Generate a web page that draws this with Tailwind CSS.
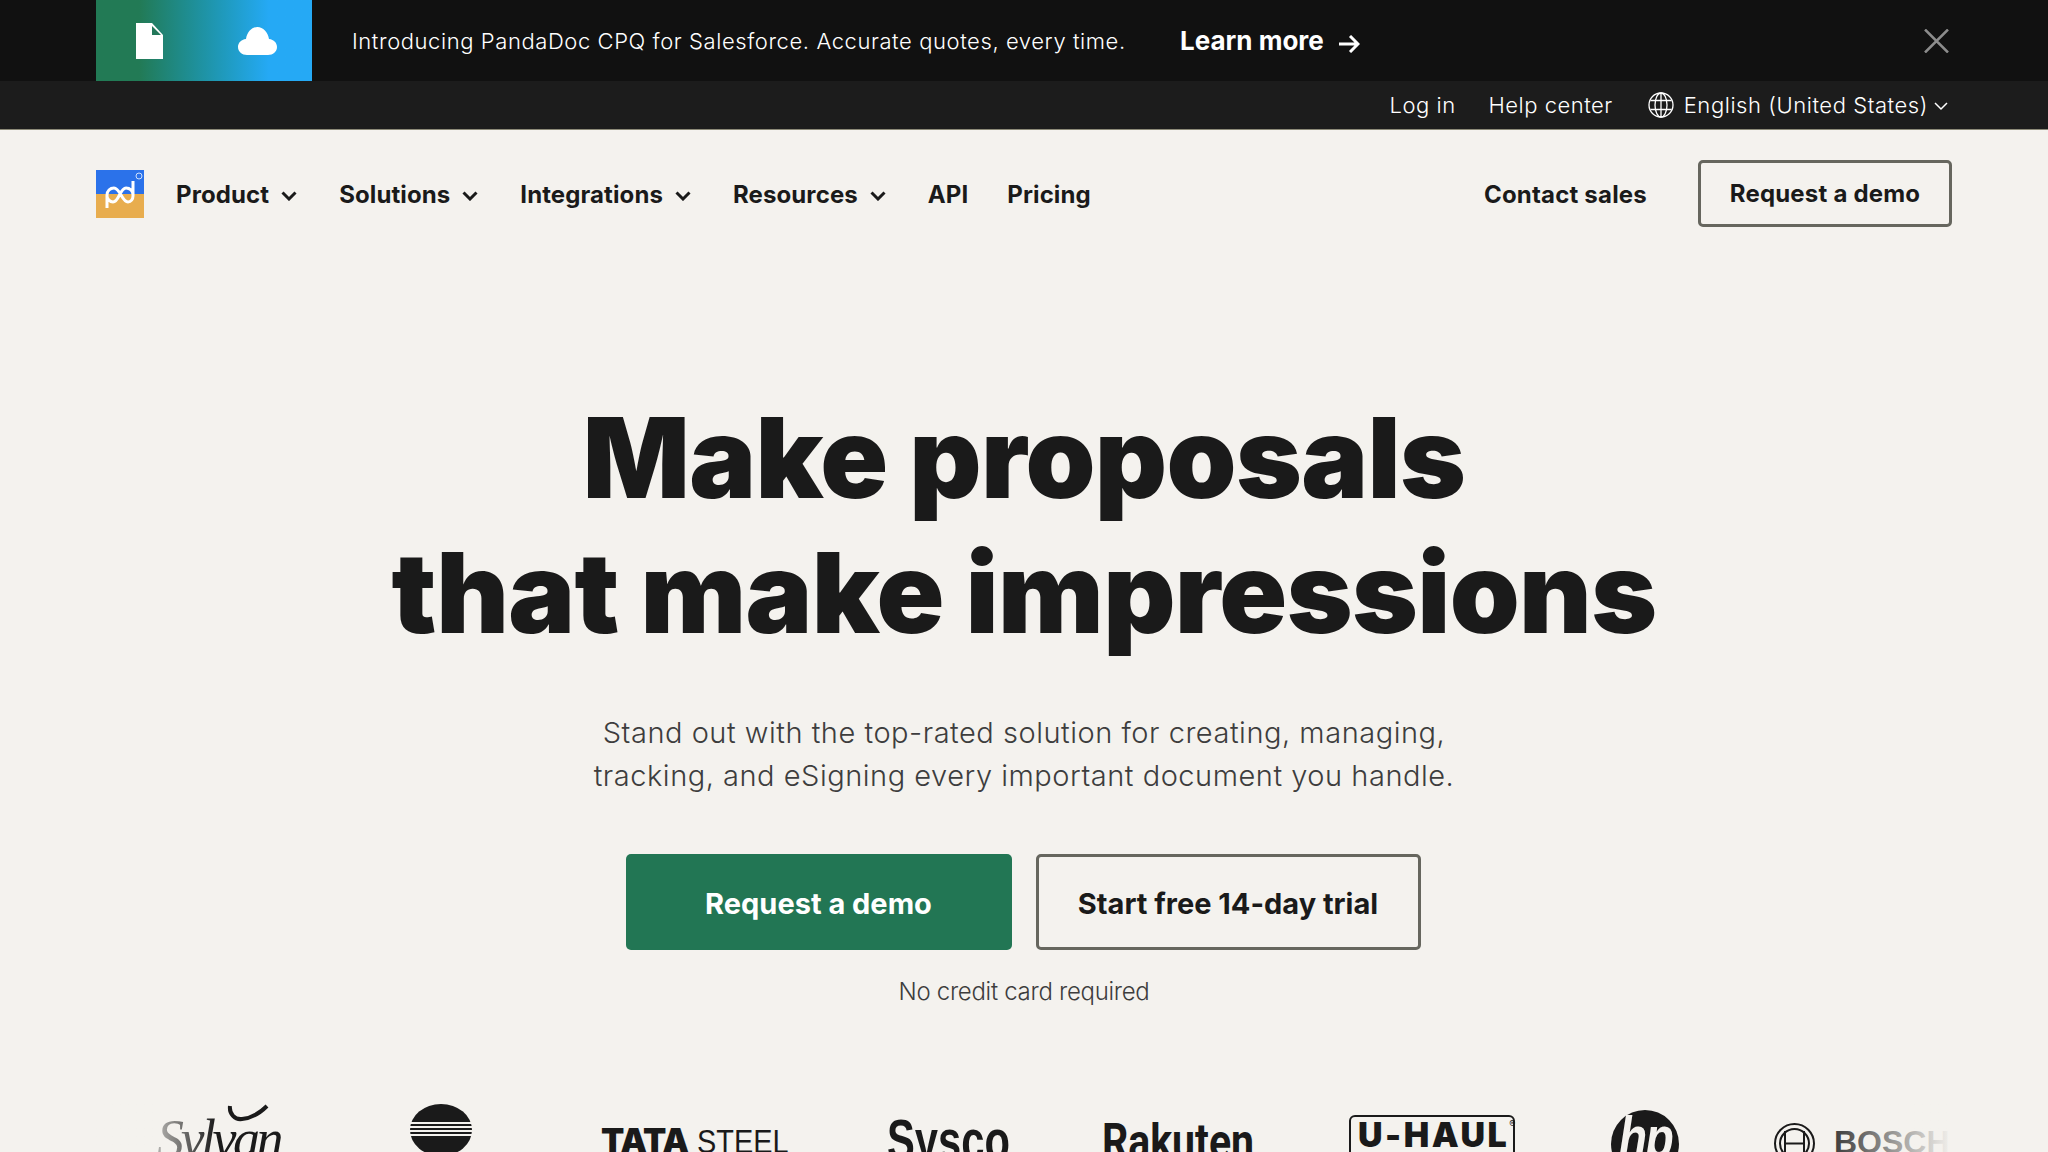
<!DOCTYPE html>
<html lang="en">
<head>
  <meta charset="UTF-8">
  <title>PandaDoc</title>
  <script src="https://cdn.jsdelivr.net/npm/@tailwindcss/browser@4"></script>
</head>
<body class="bg-[#f4f2ee] text-[#1a1a1a] font-['Inter',sans-serif] h-screen overflow-hidden">
  <!-- promo banner -->
  <div class="bg-[#111111] h-[81px] pl-[96px] pr-[99px] flex items-center text-white">
    <div class="w-[216px] h-[81px] shrink-0 flex items-center bg-gradient-to-r from-[#227a55] from-20% to-[#25a9f5] to-80%">
      <svg class="ml-[40px] w-[27px] h-[36px]" viewBox="0 0 27 36"><path d="M0 0H16L27 12V36H0Z" fill="#fff"/><path d="M16 3L25 12H16Z" fill="#24775a"/></svg>
      <svg class="ml-[75px] w-[39px] h-[28px]" viewBox="0 0 39 28"><path d="M9 28C4 28 0 24.500 0 20C0 16 3 12.500 8 12C9 5 14 0 19.500 0C25 0 30 5 31 12C36 12.500 39 16 39 20C39 24.500 35 28 30 28Z" fill="#fff"/></svg>
    </div>
    <p class="ml-[40px] mt-[2px] text-[22px] font-light tracking-[0.58px] whitespace-nowrap w-[828px]">Introducing PandaDoc CPQ for Salesforce. Accurate quotes, every time.</p>
    <a class="text-[26px] font-bold whitespace-nowrap">Learn more</a>
    <svg class="ml-[15px] mt-[6px] w-[21px] h-[18px]" viewBox="0 0 21 18" fill="none" stroke="#fff" stroke-width="3"><path d="M0 9H19M11 1L19 9L11 17"/></svg>
    <svg class="ml-auto w-[25px] h-[24px]" viewBox="0 0 25 24" fill="none" stroke="#8c8c8c" stroke-width="2.500"><path d="M1 0.500L24 23.500M24 0.500L1 23.500"/></svg>
  </div>
  <!-- utility bar -->
  <div class="bg-[#1c1c1c] h-[49px] pl-[96px] pr-[100px] flex items-center justify-end text-white text-[22px] font-light tracking-[0.5px] border-b border-[#8c8a78]">
    <a class="mt-[1px]">Log in</a>
    <a class="ml-[33px] mt-[1px]">Help center</a>
    <svg class="ml-[35px] w-[26px] h-[26px]" viewBox="0 0 26 26" fill="none" stroke="#fff" stroke-width="1.300"><circle cx="13" cy="13" r="12"/><ellipse cx="13" cy="13" rx="6" ry="12"/><path d="M13 1V25M2.500 8.500H23.500M2.500 17.500H23.500"/></svg>
    <span class="ml-[10px] mt-[1px] tracking-[0.56px]">English (United States)</span>
    <svg class="ml-[6px] mt-[3px] w-[14px] h-[9px]" viewBox="0 0 14 9" fill="none" stroke="#fff" stroke-width="1.500"><path d="M1 1L7 7L13 1"/></svg>
  </div>
  <!-- main nav -->
  <nav class="h-[128px] pb-[1px] px-[96px] flex items-center text-[24px] font-bold tracking-[0.1px]">
    <svg class="w-[48px] h-[48px] shrink-0" viewBox="0 0 48 48">
      <rect width="48" height="24" fill="#2b72ea"/>
      <rect y="24" width="48" height="24" fill="#e8ad4e"/>
      <path d="M11 38V25C11 21 14 18 18 18C24 18 26 32 32 32C35 32 37 29 37 26V11M37 25C37 21 34 18 30 18C24 18 23 32 17 32C14 32 11 29 11 26" fill="none" stroke="#fff" stroke-width="3"/>
      <circle cx="43" cy="6" r="3" fill="none" stroke="#cfe0fb" stroke-width="1"/>
    </svg>
    <a class="ml-[32px] mt-[2px]">Product</a>
    <svg class="ml-[12px] mt-[4px] w-[16px] h-[10px]" viewBox="0 0 16 10" fill="none" stroke="#1a1a1a" stroke-width="3"><path d="M1.500 1.500L8 8L14.500 1.500"/></svg>
    <a class="ml-[42px] mt-[2px]">Solutions</a>
    <svg class="ml-[12px] mt-[4px] w-[16px] h-[10px]" viewBox="0 0 16 10" fill="none" stroke="#1a1a1a" stroke-width="3"><path d="M1.500 1.500L8 8L14.500 1.500"/></svg>
    <a class="ml-[42px] mt-[2px]">Integrations</a>
    <svg class="ml-[12px] mt-[4px] w-[16px] h-[10px]" viewBox="0 0 16 10" fill="none" stroke="#1a1a1a" stroke-width="3"><path d="M1.500 1.500L8 8L14.500 1.500"/></svg>
    <a class="ml-[42px] mt-[2px]">Resources</a>
    <svg class="ml-[12px] mt-[4px] w-[16px] h-[10px]" viewBox="0 0 16 10" fill="none" stroke="#1a1a1a" stroke-width="3"><path d="M1.500 1.500L8 8L14.500 1.500"/></svg>
    <a class="ml-[42px] mt-[2px]">API</a>
    <a class="ml-[39px] mt-[2px]">Pricing</a>
    <a class="ml-auto mt-[2px] tracking-[0.2px]">Contact sales</a>
    <a class="ml-[51px] w-[254px] h-[67px] border-[3px] border-[#66665e] rounded-[5px] flex items-center justify-center tracking-[0.2px]">Request a demo</a>
  </nav>
  <!-- hero -->
  <main class="flex flex-col items-center text-center">
    <h1 class="mt-[132px] text-[112px] leading-[135px] font-black tracking-[-0.6px]">Make proposals<br>that make impressions</h1>
    <p class="mt-[51px] text-[29px] leading-[43px] font-light text-[#3d3d3d] tracking-[0.52px]">Stand out with the top-rated solution for creating, managing,<br>tracking, and eSigning every important document you handle.</p>
    <div class="mt-[57px] mr-[2px] flex gap-[24px] text-[29px] font-bold">
      <a class="w-[386px] h-[96px] pt-[3px] rounded-[5px] bg-[#227654] text-white flex items-center justify-center">Request a demo</a>
      <a class="w-[385px] h-[96px] pt-[3px] rounded-[5px] border-[3px] border-[#66665e] flex items-center justify-center">Start free 14-day trial</a>
    </div>
    <p class="mt-[27px] text-[24px] leading-[30px] font-light text-[#3d3d3d] tracking-[-0.3px]">No credit card required</p>
  </main>
  <!-- customer logos, cut off by the bottom of the window -->
  <div class="relative mt-[97px] mx-[96px] h-[70px] flex items-start overflow-hidden font-['Liberation_Sans',sans-serif]">
    <div class="ml-[61px] w-[253px] shrink-0 relative">
      <span class="block mt-[5px] font-['Liberation_Serif',serif] italic text-[54px] leading-[60px] tracking-[-3.500px] whitespace-nowrap">Sylvan</span>
      <svg class="absolute left-[70px] top-[0px] w-[42px] h-[20px]" viewBox="0 0 42 20" fill="none" stroke="#1a1a1a" stroke-width="4"><path d="M3 2C2 10 8 16 15 15C25 14 34 8 40 2"/></svg>
    </div>
    <svg class="w-[62px] h-[52px] shrink-0" viewBox="0 0 62 52">
      <ellipse cx="31" cy="26" rx="31" ry="26" fill="#1a1a1a"/>
      <path d="M0 19H62M0 23H62M0 27H62M0 31H62" stroke="#f4f2ee" stroke-width="1.800"/>
    </svg>
    <div class="ml-[129px] mt-[20px] w-[286px] shrink-0 flex text-[34px] leading-[34px] whitespace-nowrap">
      <b class="font-['Inter',sans-serif] font-black tracking-[-1px]">TATA</b>
      <span class="ml-[9px] origin-left scale-x-[0.85]">STEEL</span>
    </div>
    <div class="mt-[7px] w-[215px] shrink-0">
      <span class="block w-fit origin-left scale-x-[0.72] font-bold text-[58px] leading-[58px]">Sysco</span>
    </div>
    <div class="mt-[13px] w-[247px] shrink-0">
      <span class="block w-fit origin-left scale-x-[0.82] font-['Roboto',sans-serif] font-bold text-[50px] leading-[50px]">Rakuten</span>
    </div>
    <div class="mt-[11px] w-[166px] h-[60px] border-2 border-[#1a1a1a] rounded-[6px] shrink-0 flex pl-[7px] font-['Inter',sans-serif] font-black text-[34px] leading-[35px] tracking-[2.500px] whitespace-nowrap">U-HAUL<span class="text-[9px] leading-[14px] font-normal tracking-normal">®</span></div>
    <div class="ml-[96px] mt-[6px] w-[68px] h-[68px] rounded-full bg-[#1a1a1a] shrink-0 flex justify-center text-[#f4f2ee] font-bold italic text-[58px] leading-[54px] tracking-[-2px]"><span class="scale-x-[0.8]">hp</span></div>
    <svg class="ml-[95px] mt-[19px] w-[41px] h-[41px] shrink-0" viewBox="0 0 41 41" fill="none" stroke="#1a1a1a" stroke-width="2"><circle cx="20.500" cy="20.500" r="19.500"/><circle cx="20.500" cy="20.500" r="14.500"/><path d="M11 8V33M30 8V33M11 20.500H30"/></svg>
    <span class="ml-[19px] mt-[22px] font-bold text-[32px] leading-[32px] text-[#333333] whitespace-nowrap">BOSCH</span>
    <div class="absolute left-0 top-0 w-[120px] h-full bg-gradient-to-r from-[#f4f2ee] from-30% to-transparent"></div>
    <div class="absolute right-0 top-0 w-[125px] h-full bg-gradient-to-r from-transparent to-[#f4f2ee]"></div>
  </div>
</body>
</html>
